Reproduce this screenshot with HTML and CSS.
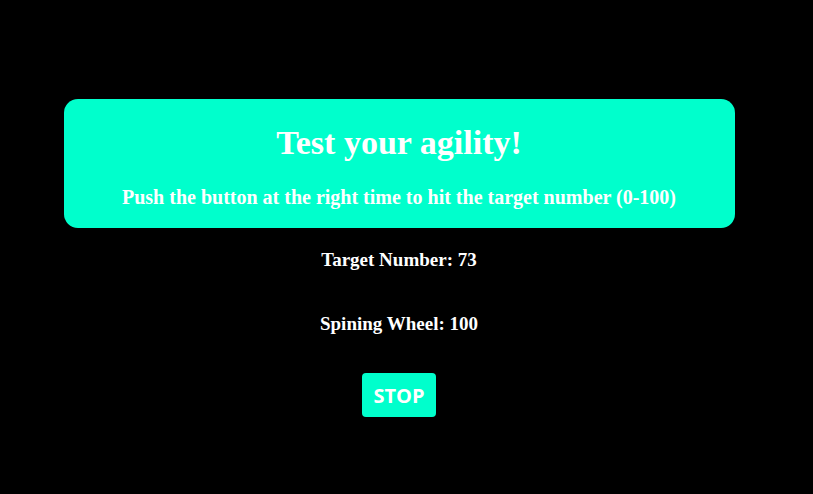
FILE: index.html
```html
<!DOCTYPE html>
<html lang="en">
<head>
<meta charset="utf-8">
<title>Test your agility!</title>
<link rel="stylesheet" href="styles.css">
</head>
<body>
<main class="page">
  <header class="banner">
    <h1 class="title">Test your agility!</h1>
    <p class="subtitle">Push the button at the right time to hit the target number (0-100)</p>
  </header>
  <p class="stat">Target Number: 73</p>
  <p class="stat stat-wheel">Spining Wheel: 100</p>
  <button class="stop" type="button">STOP</button>
</main>
</body>
</html>
```

FILE: styles.css
```css
html, body {
  margin: 0;
  padding: 0;
  background: #000;
}
body {
  font-family: "Liberation Serif", "DejaVu Serif", serif;
  color: #fff;
}
.page {
  width: 798px;
  display: flex;
  flex-direction: column;
  align-items: center;
  padding-top: 99px;
}
.banner {
  box-sizing: border-box;
  width: 671px;
  height: 129px;
  background: #00ffcc;
  border-radius: 14px;
  display: flex;
  flex-direction: column;
  align-items: center;
  padding-top: 22px;
}
.title {
  margin: 0;
  font-size: 34px;
  line-height: 44px;
  font-weight: 700;
}
.subtitle {
  margin: 20px 0 0;
  font-size: 20px;
  line-height: 24px;
  font-weight: 700;
}
.stat {
  margin: 19px 0 0;
  font-size: 19px;
  line-height: 26px;
  font-weight: 700;
}
.stat-wheel {
  margin-top: 38px;
}
.stop {
  margin-top: 36px;
  width: 74px;
  height: 44px;
  border: none;
  border-radius: 4px;
  background: #00ffcc;
  color: #fff;
  font-family: "Open Sans", sans-serif;
  font-weight: 700;
  font-size: 20px;
  padding: 0;
  cursor: pointer;
}
```
